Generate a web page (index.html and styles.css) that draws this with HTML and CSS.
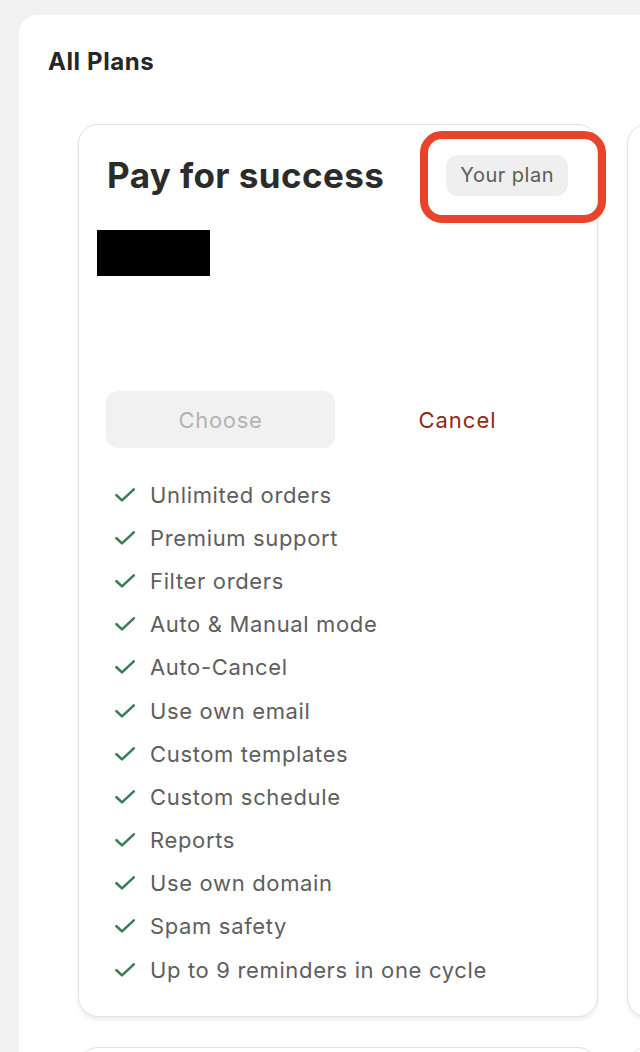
FILE: index.html
```html
<!DOCTYPE html>
<html>
<head>
<meta charset="utf-8">
<link rel="stylesheet" href="styles.css">
</head>
<body>
<div class="panel">
  <h2 class="panel-title">All Plans</h2>
  <div class="plans">
    <div class="card">
      <div class="card-head">
        <h3 class="plan-name">Pay for success</h3>
        <span class="badge">Your plan</span>
      </div>
      <div class="redact"></div>
      <div class="actions">
        <button class="btn btn-choose">Choose</button>
        <button class="btn btn-cancel">Cancel</button>
      </div>
      <ul class="features">
        <li><svg class="check" viewBox="0 0 20 14"><path d="M1.5 7.2 L7 12.4 L18.8 1.4"/></svg>Unlimited orders</li>
        <li><svg class="check" viewBox="0 0 20 14"><path d="M1.5 7.2 L7 12.4 L18.8 1.4"/></svg>Premium support</li>
        <li><svg class="check" viewBox="0 0 20 14"><path d="M1.5 7.2 L7 12.4 L18.8 1.4"/></svg>Filter orders</li>
        <li><svg class="check" viewBox="0 0 20 14"><path d="M1.5 7.2 L7 12.4 L18.8 1.4"/></svg>Auto &amp; Manual mode</li>
        <li><svg class="check" viewBox="0 0 20 14"><path d="M1.5 7.2 L7 12.4 L18.8 1.4"/></svg>Auto-Cancel</li>
        <li><svg class="check" viewBox="0 0 20 14"><path d="M1.5 7.2 L7 12.4 L18.8 1.4"/></svg>Use own email</li>
        <li><svg class="check" viewBox="0 0 20 14"><path d="M1.5 7.2 L7 12.4 L18.8 1.4"/></svg>Custom templates</li>
        <li><svg class="check" viewBox="0 0 20 14"><path d="M1.5 7.2 L7 12.4 L18.8 1.4"/></svg>Custom schedule</li>
        <li><svg class="check" viewBox="0 0 20 14"><path d="M1.5 7.2 L7 12.4 L18.8 1.4"/></svg>Reports</li>
        <li><svg class="check" viewBox="0 0 20 14"><path d="M1.5 7.2 L7 12.4 L18.8 1.4"/></svg>Use own domain</li>
        <li><svg class="check" viewBox="0 0 20 14"><path d="M1.5 7.2 L7 12.4 L18.8 1.4"/></svg>Spam safety</li>
        <li><svg class="check" viewBox="0 0 20 14"><path d="M1.5 7.2 L7 12.4 L18.8 1.4"/></svg>Up to 9 reminders in one cycle</li>
      </ul>
      <div class="highlight"></div>
    </div>
    <div class="card card-empty"></div>
    <div class="card card-empty"></div>
    <div class="card card-empty"></div>
  </div>
</div>
</body>
</html>
```
FILE: styles.css
```css
html, body {
  margin: 0;
  padding: 0;
  background: #f1f1f1;
  overflow: hidden;
  height: 1052px;
}
body {
  font-family: Inter, "Noto Sans", sans-serif;
  color: #2b2b2b;
}
.panel {
  margin: 15px 0 0 19px;
  width: 1200px;
  background: #ffffff;
  border-top-left-radius: 18px;
  padding: 29px 0 0 29px;
  min-height: 1100px;
}
.panel-title {
  margin: 0;
  font-size: 24px;
  font-weight: 700;
  line-height: 36px;
  color: #262626;
  letter-spacing: 0.6px;
}
.plans {
  display: grid;
  grid-template-columns: 520px 520px;
  column-gap: 29px;
  row-gap: 30px;
  margin: 44px 0 0 30px;
}
.card {
  position: relative;
  box-sizing: border-box;
  border: 1px solid #e2e2e2;
  border-radius: 20px;
  box-shadow: 0 3px 4px rgba(0, 0, 0, 0.07);
  padding: 27px 29px 25px 27px;
  background: #fff;
}
.card-empty {
  min-height: 893px;
}
.card-head {
  display: flex;
  justify-content: space-between;
  align-items: center;
}
.plan-name {
  margin: 0 0 0 1px;
  font-size: 35px;
  font-weight: 700;
  line-height: 46px;
  color: #2b2b2b;
  letter-spacing: 0.4px;
}
.badge {
  background: #efefef;
  color: #5c5c5c;
  font-size: 20px;
  line-height: 41px;
  height: 41px;
  padding: 0 14px;
  border-radius: 12px;
  letter-spacing: 0.5px;
}
.redact {
  width: 113px;
  height: 46px;
  background: #000;
  margin: 32px 0 0 -9px;
}
.actions {
  display: grid;
  grid-template-columns: 229px 1fr;
  column-gap: 12px;
  margin-top: 115px;
}
.btn {
  font-family: inherit;
  font-size: 22px;
  height: 57px;
  border: none;
  border-radius: 12px;
  background: transparent;
  padding: 0;
  letter-spacing: 0.7px;
}
.btn-choose {
  background: #f1f1f1;
  color: #b3b3b3;
}
.btn-cancel {
  color: #8e2a17;
  letter-spacing: 1px;
}
.features {
  list-style: none;
  margin: 25px 0 0 0;
  padding: 0;
}
.features li {
  display: flex;
  align-items: center;
  height: 43.2px;
  font-size: 22px;
  color: #5e5e5e;
  padding-left: 9px;
  letter-spacing: 0.65px;
}
.check {
  width: 20px;
  height: 14px;
  margin-right: 15px;
  fill: none;
  stroke: #3c7d58;
  stroke-width: 2.6;
  stroke-linecap: round;
  stroke-linejoin: round;
}
.highlight {
  position: absolute;
  left: 341px;
  top: 6px;
  width: 186px;
  height: 92px;
  box-sizing: border-box;
  border: 8px solid #e8432b;
  border-radius: 22px;
}
```
